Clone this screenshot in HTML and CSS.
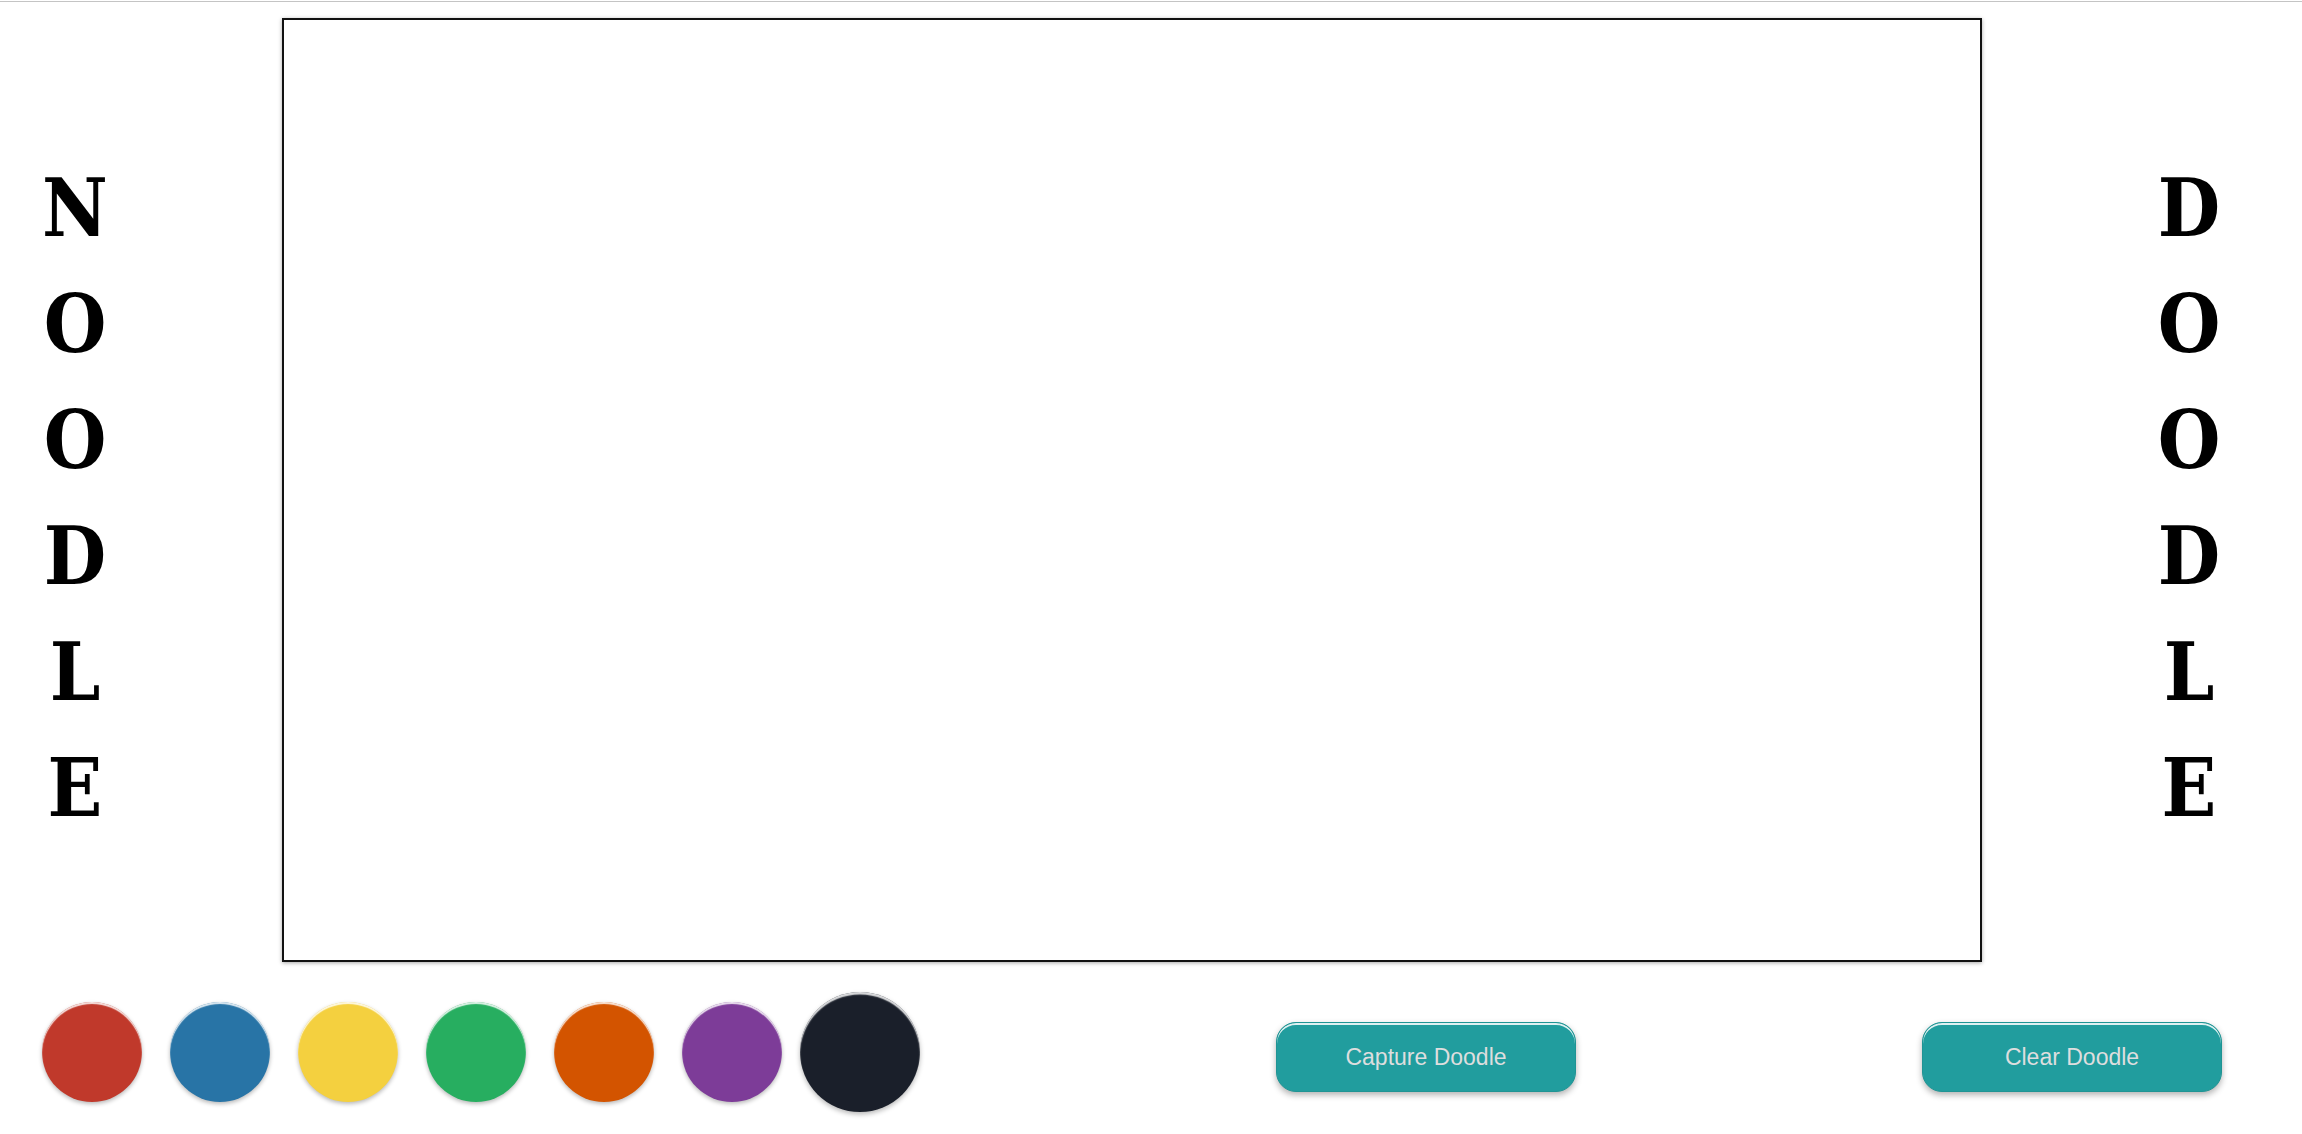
FILE: index.html
```html
<!DOCTYPE html>
<html lang="en">
<head>
<meta charset="utf-8">
<title>Noodle Doodle</title>
<link rel="stylesheet" href="styles.css">
</head>
<body>
<div class="topline"></div>
<div class="main">
  <div class="word">
    <span>N</span><span>O</span><span>O</span><span>D</span><span>L</span><span>E</span>
  </div>
  <div class="canvas"></div>
  <div class="word">
    <span>D</span><span>O</span><span>O</span><span>D</span><span>L</span><span>E</span>
  </div>
</div>
<div class="bottom">
  <div class="palette">
    <div class="swatch red"></div>
    <div class="swatch blue"></div>
    <div class="swatch yellow"></div>
    <div class="swatch green"></div>
    <div class="swatch orange"></div>
    <div class="swatch purple"></div>
    <div class="swatch black selected"></div>
  </div>
  <button class="btn capture">Capture Doodle</button>
  <button class="btn clear">Clear Doodle</button>
</div>
</body>
</html>
```
FILE: styles.css
```css
html, body {
  margin: 0;
  padding: 0;
  background: #fff;
}
body {
  font-family: "Liberation Sans", Arial, sans-serif;
  width: 2302px;
  height: 1134px;
  overflow: hidden;
}
.topline {
  height: 1px;
  margin-top: 1px;
  background: #c4c4c4;
}
.main {
  display: flex;
  align-items: flex-start;
  padding-top: 16px;
  gap: 132px;
}
.word {
  width: 150px;
  display: flex;
  flex-direction: column;
  align-items: center;
  margin-top: 132px;
  font-family: "DejaVu Serif", serif;
  font-stretch: condensed;
  font-weight: bold;
  font-size: 80px;
  line-height: 116px;
  color: #000;
}
.word span {
  display: block;
  height: 116px;
}
.canvas {
  width: 1696px;
  height: 940px;
  border: 2px solid #111;
  background: #fff;
  box-shadow: 0 1px 4px rgba(0, 0, 0, 0.35);
  flex: none;
}
.bottom {
  display: flex;
  align-items: flex-start;
  margin-top: 40px;
}
.palette {
  display: flex;
  gap: 28px;
  padding-left: 42px;
}
.swatch {
  width: 100px;
  height: 100px;
  border-radius: 50%;
  box-shadow: 0 2px 4px rgba(0, 0, 0, 0.28), inset 0 2px 1px rgba(255, 255, 255, 0.85);
}
.swatch.selected {
  transform: scale(1.2);
}
.red { background: #c0392b; }
.blue { background: #2874a6; }
.yellow { background: #f4d03f; }
.green { background: #27ae60; }
.orange { background: #d35400; }
.purple { background: #7d3c98; }
.black { background: #1a1f2a; }
.btn {
  width: 300px;
  height: 70px;
  margin-top: 20px;
  border: 1px solid #1f9494;
  border-radius: 20px;
  background: #219d9e;
  color: #dedede;
  font-family: "Liberation Sans", Arial, sans-serif;
  font-size: 23px;
  padding: 0;
  box-shadow: inset 0 2px 0 rgba(255, 255, 255, 0.85), 0 3px 6px rgba(0, 0, 0, 0.3);
}
.capture {
  margin-left: 366px;
}
.clear {
  margin-left: 346px;
}
```
